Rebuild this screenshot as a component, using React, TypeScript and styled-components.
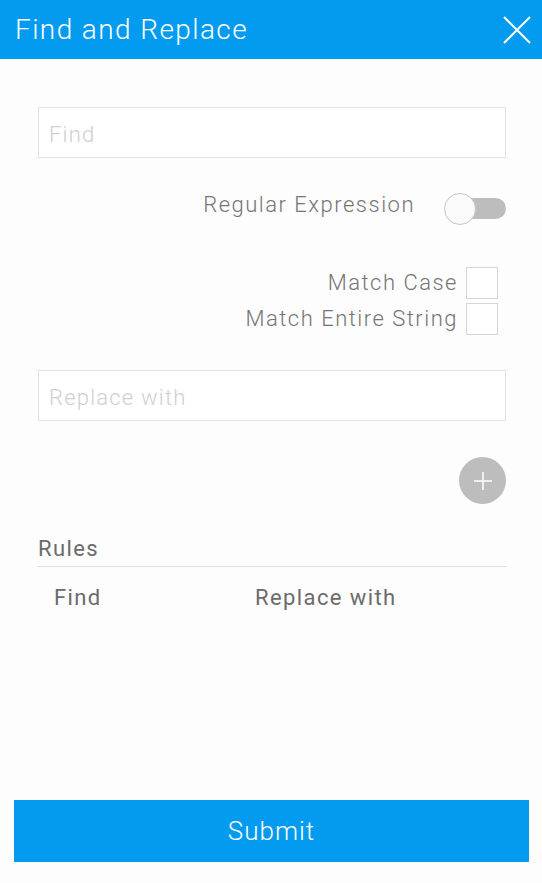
import styled, { createGlobalStyle } from "styled-components";

const Global = createGlobalStyle`
  html, body {
    margin: 0;
    padding: 0;
    background: #fdfdfd;
    font-family: Roboto, "Liberation Sans", sans-serif;
  }
`;

const Page = styled.div`
  width: 542px;
  height: 883px;
  display: flex;
  flex-direction: column;
  background: #fdfdfd;
`;

const Header = styled.div`
  height: 59px;
  background: #039bef;
  display: flex;
  align-items: center;
  justify-content: space-between;
  padding: 0 11px 0 15px;
`;

const Title = styled.h1`
  margin: 0;
  color: #fff;
  font-size: 28px;
  font-weight: 300;
  letter-spacing: 1.4px;
`;

const Body = styled.div`
  flex: 1;
  display: flex;
  flex-direction: column;
  padding: 48px 36px 0 38px;
`;

const TextField = styled.input<{ $top?: number }>`
  box-sizing: border-box;
  width: 468px;
  height: 51px;
  margin-top: ${(p) => p.$top ?? 0}px;
  border: 1px solid #e3e3e3;
  background: #fff;
  padding: 3px 10px 0;
  font-family: inherit;
  font-size: 22px;
  font-weight: 300;
  letter-spacing: 1.2px;
  outline: none;
  &::placeholder {
    color: #cfcfcf;
  }
`;

const OptionRow = styled.div`
  display: flex;
  justify-content: flex-end;
  align-items: center;
  gap: 29px;
  margin-top: 34px;
  width: 468px;
`;

const Label = styled.span<{ $lift?: number }>`
  color: #757575;
  font-size: 22px;
  font-weight: 300;
  letter-spacing: 1.5px;
  margin-bottom: ${(p) => p.$lift ?? 0}px;
`;

const Toggle = styled.div`
  position: relative;
  width: 62px;
  height: 32px;
  display: flex;
  align-items: center;
`;

const Track = styled.div`
  margin-left: 4px;
  width: 58px;
  height: 21px;
  border-radius: 11px;
  background: #bdbdbd;
`;

const Knob = styled.div`
  position: absolute;
  left: 0;
  top: 0;
  box-sizing: border-box;
  width: 32px;
  height: 32px;
  border-radius: 50%;
  background: #fafafa;
  border: 1px solid #c6c6c6;
`;

const CheckGroup = styled.div`
  display: flex;
  flex-direction: column;
  gap: 5px;
  margin-top: 42px;
  width: 460px;
`;

const CheckRow = styled.label`
  display: flex;
  justify-content: flex-end;
  align-items: center;
  gap: 8px;
  height: 31px;
`;

const Box = styled.span`
  box-sizing: border-box;
  width: 32px;
  height: 32px;
  border: 1px solid #d6d6d6;
  background: #fff;
`;

const AddRow = styled.div`
  display: flex;
  justify-content: flex-end;
  width: 468px;
  margin-top: 36px;
`;

const AddButton = styled.button`
  width: 47px;
  height: 47px;
  border-radius: 50%;
  border: none;
  background: #bdbdbd;
  display: flex;
  align-items: center;
  justify-content: center;
  padding: 0;
`;

const RulesTitle = styled.div`
  margin-top: 32px;
  color: #6b6b6b;
  font-size: 22px;
  letter-spacing: 1.4px;
  padding-bottom: 5px;
  border-bottom: 1px solid #e0e0e0;
  width: 468px;
`;

const RulesHead = styled.div`
  display: grid;
  grid-template-columns: 201px 1fr;
  padding: 18px 16px 0;
  color: #6b6b6b;
  font-size: 22px;
  letter-spacing: 1.4px;
`;

const Footer = styled.div`
  padding: 0 13px 21px 14px;
`;

const Submit = styled.button`
  width: 515px;
  height: 62px;
  border: none;
  background: #039bef;
  color: #fff;
  font-family: inherit;
  font-size: 26px;
  font-weight: 300;
  letter-spacing: 1px;
`;

export default function App() {
  return (
    <Page>
      <Global />
      <Header>
        <Title>Find and Replace</Title>
        <svg width="28" height="28" viewBox="0 0 28 28">
          <path d="M1 1 L27 27 M27 1 L1 27" stroke="#fff" strokeWidth="2" />
        </svg>
      </Header>
      <Body>
        <TextField placeholder="Find" />
        <OptionRow>
          <Label $lift={8}>Regular Expression</Label>
          <Toggle>
            <Track />
            <Knob />
          </Toggle>
        </OptionRow>
        <CheckGroup>
          <CheckRow>
            <Label>Match Case</Label>
            <Box />
          </CheckRow>
          <CheckRow>
            <Label>Match Entire String</Label>
            <Box />
          </CheckRow>
        </CheckGroup>
        <TextField placeholder="Replace with" $top={36} />
        <AddRow>
          <AddButton>
            <svg width="20" height="20" viewBox="0 0 20 20">
              <path d="M10 1 V19 M1 10 H19" stroke="#fff" strokeWidth="1.5" />
            </svg>
          </AddButton>
        </AddRow>
        <RulesTitle>Rules</RulesTitle>
        <RulesHead>
          <span>Find</span>
          <span>Replace with</span>
        </RulesHead>
      </Body>
      <Footer>
        <Submit>Submit</Submit>
      </Footer>
    </Page>
  );
}
